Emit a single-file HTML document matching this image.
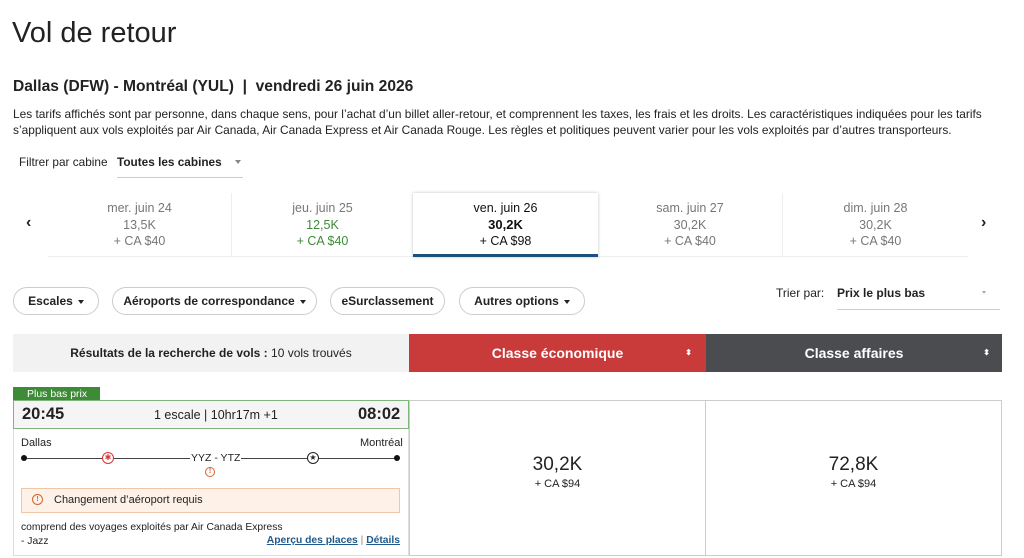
<!DOCTYPE html>
<html><head><meta charset="utf-8"><style>
*{margin:0;padding:0;box-sizing:border-box}
body{width:1024px;height:558px;overflow:hidden;background:#fff;font-family:"Liberation Sans",sans-serif;color:#222;position:relative}
.a{position:absolute;white-space:nowrap}
.cell{position:absolute;top:193px;height:64px;text-align:center;font-size:12.5px;line-height:16.5px;padding-top:7px;color:#777}
.pill{position:absolute;top:287px;height:28px;border:1px solid #ccc;border-radius:14px;font-size:12px;font-weight:bold;line-height:26px;text-align:center;color:#222}
.car{display:inline-block;width:0;height:0;border-left:3.5px solid transparent;border-right:3.5px solid transparent;border-top:4px solid #222;vertical-align:middle;margin-left:5px}
.dot{position:absolute;width:6px;height:6px;border-radius:3px;background:#111}
</style></head><body>
<div class="a" style="left:12px;top:17px;font-size:29px;color:#222">Vol de retour</div>
<div class="a" style="left:13px;top:78px;font-size:15.6px;font-weight:bold">Dallas (DFW) - Montréal (YUL) &nbsp;|&nbsp; vendredi 26 juin 2026</div>
<div class="a" style="left:13px;top:106px;font-size:11.9px;line-height:16px;color:#222">Les tarifs affichés sont par personne, dans chaque sens, pour l’achat d’un billet aller-retour, et comprennent les taxes, les frais et les droits. Les caractéristiques indiquées pour les tarifs<br>s’appliquent aux vols exploités par Air Canada, Air Canada Express et Air Canada Rouge. Les règles et politiques peuvent varier pour les vols exploités par d’autres transporteurs.</div>
<div class="a" style="left:19px;top:155px;font-size:11.8px">Filtrer par cabine</div>
<div class="a" style="left:117px;top:155px;font-size:11.8px;font-weight:bold;width:126px;height:23px;border-bottom:1px solid #ccc">Toutes les cabines<span class="car" style="position:absolute;right:2px;top:5px;border-top-color:#888"></span></div>

<div class="a" style="left:26px;top:214px;font-size:16px;font-weight:bold">‹</div>
<div class="a" style="left:981px;top:214px;font-size:16px;font-weight:bold">›</div>
<div class="a" style="left:48px;top:256px;width:920px;height:1px;background:#eee"></div>
<div class="cell" style="left:48px;width:184px;border-right:1px solid #eee">mer. juin 24<br>13,5K<br>+ CA $40</div>
<div class="cell" style="left:232px;width:181px;color:#3d8b37"><span style="color:#777">jeu. juin 25</span><br>12,5K<br>+ CA $40</div>
<div class="cell" style="left:413px;width:185px;color:#111;box-shadow:0 0 3px rgba(0,0,0,.25);border-bottom:3px solid #1f4f7c">ven. juin 26<br><b style="font-size:13px">30,2K</b><br>+ CA $98</div>
<div class="cell" style="left:598px;width:185px;border-right:1px solid #eee">sam. juin 27<br>30,2K<br>+ CA $40</div>
<div class="cell" style="left:783px;width:185px">dim. juin 28<br>30,2K<br>+ CA $40</div>

<div class="pill" style="left:13px;width:86px">Escales<span class="car"></span></div>
<div class="pill" style="left:112px;width:205px">Aéroports de correspondance<span class="car"></span></div>
<div class="pill" style="left:330px;width:115px">eSurclassement</div>
<div class="pill" style="left:459px;width:126px">Autres options<span class="car"></span></div>
<div class="a" style="left:776px;top:286px;font-size:12px">Trier par:</div>
<div class="a" style="left:837px;top:286px;width:163px;height:24px;border-bottom:1px solid #ccc;font-size:12px;font-weight:bold">Prix le plus bas<span class="car" style="position:absolute;right:14px;top:5px;border-top-color:#aaa;border-left-width:2.5px;border-right-width:2.5px;border-top-width:3px"></span></div>

<div class="a" style="left:13px;top:334px;width:396px;height:38px;background:#f2f2f2;font-size:12px;line-height:38px;text-align:center"><b>Résultats de la recherche de vols :</b> 10 vols trouvés</div>
<div class="a" style="left:409px;top:334px;width:297px;height:38px;background:#c93a3a;color:#fff;font-size:14px;font-weight:bold;line-height:38px;text-align:center">Classe économique<span style="position:absolute;right:14px;font-size:8px;line-height:38px">⬍</span></div>
<div class="a" style="left:706px;top:334px;width:296px;height:38px;background:#4a4c50;color:#fff;font-size:14px;font-weight:bold;line-height:38px;text-align:center">Classe affaires<span style="position:absolute;right:12px;font-size:8px;line-height:38px">⬍</span></div>

<div class="a" style="left:13px;top:387px;width:87px;height:14px;background:#3d8b37;color:#fff;font-size:10.5px;line-height:14px;padding-left:14px">Plus bas prix</div>
<div class="a" style="left:13px;top:400px;width:396px;height:156px;border:1px solid #ddd;border-top:none"></div>
<div class="a" style="left:13px;top:400px;width:396px;height:29px;background:#f5f5f5;border:1px solid #7fb57a"></div>
<div class="a" style="left:22px;top:405px;font-size:16.5px;font-weight:bold">20:45</div>
<div class="a" style="left:154px;top:408px;font-size:12.5px">1 escale | 10hr17m +1</div>
<div class="a" style="left:358px;top:405px;font-size:16.5px;font-weight:bold">08:02</div>
<div class="a" style="left:21px;top:437px;font-size:11px">Dallas</div>
<div class="a" style="left:360px;top:437px;font-size:11px">Montréal</div>
<div class="a" style="left:24px;top:458px;width:372px;height:1px;background:#444"></div>
<div class="dot" style="left:21px;top:455px"></div><div class="dot" style="left:394px;top:455px"></div>
<div class="a" style="left:102px;top:452px;width:12px;height:12px;border-radius:6px;background:#fff;border:1px solid #d33;color:#d33;font-size:8px;line-height:10px;text-align:center">✱</div>
<div class="a" style="left:307px;top:452px;width:12px;height:12px;border-radius:6px;background:#fff;border:1px solid #222;font-size:8px;line-height:10px;text-align:center">★</div>
<div class="a" style="left:190px;top:452px;font-size:10.5px;background:#fff;padding:0 1px">YYZ - YTZ</div>
<div class="a" style="left:205px;top:467px;width:10px;height:10px;border-radius:5px;border:1px solid #d9622b;color:#d9622b;font-size:7px;line-height:8px;text-align:center;font-weight:bold">!</div>
<div class="a" style="left:21px;top:488px;width:379px;height:25px;background:#fdf1e8;border:1px solid #f2c6a5"></div>
<div class="a" style="left:32px;top:494px;width:11px;height:11px;border-radius:6px;border:1px solid #d9622b;color:#d9622b;font-size:7px;line-height:9px;text-align:center;font-weight:bold">!</div>
<div class="a" style="left:54px;top:494px;font-size:11px">Changement d’aéroport requis</div>
<div class="a" style="left:21px;top:521px;font-size:10.3px;line-height:14px">comprend des voyages exploités par Air Canada Express<br>- Jazz</div>
<div class="a" style="right:624px;top:535px;font-size:10.3px;color:#1f5a8c;font-weight:bold"><u>Aperçu des places</u> <span style="color:#888;font-weight:normal">|</span> <u>Détails</u></div>

<div class="a" style="left:409px;top:400px;width:297px;height:156px;border:1px solid #ccc;text-align:center;padding-top:53px;font-size:19px">30,2K<div style="font-size:11px;margin-top:2px">+ CA $94</div></div>
<div class="a" style="left:705px;top:400px;width:297px;height:156px;border:1px solid #ccc;text-align:center;padding-top:53px;font-size:19px">72,8K<div style="font-size:11px;margin-top:2px">+ CA $94</div></div>
</body></html>
